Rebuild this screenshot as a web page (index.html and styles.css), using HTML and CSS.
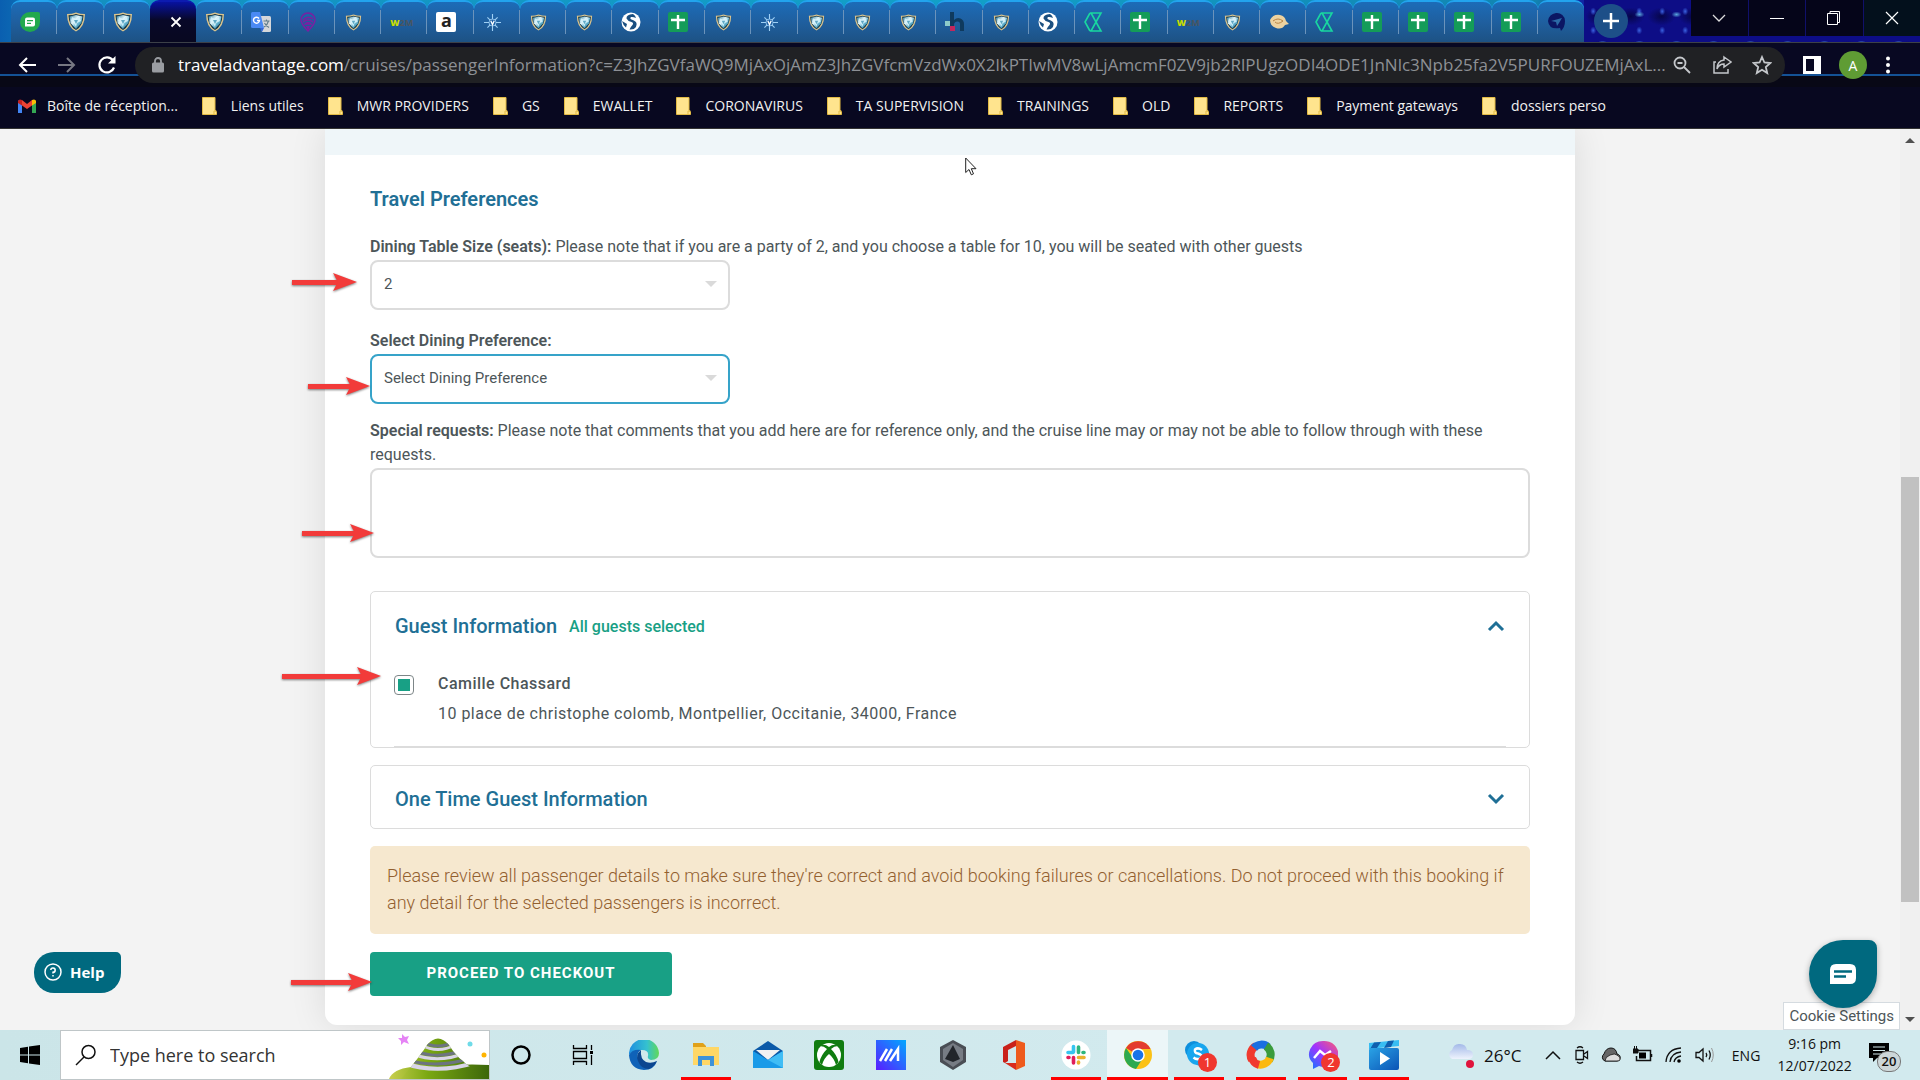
FILE: index.html
```html
<!DOCTYPE html>
<html lang="en">
<head>
<meta charset="utf-8">
<title>Passenger information</title>
<link rel="stylesheet" href="styles.css">
</head>
<body>
<svg class="sprite" aria-hidden="true">
  <defs>
    <linearGradient id="gem" x1="0" y1="0" x2="1" y2="1"><stop offset="0" stop-color="#2b7ea0"/><stop offset=".4" stop-color="#e2f6fb"/><stop offset=".65" stop-color="#5fb2cf"/><stop offset="1" stop-color="#123c55"/></linearGradient>
    <linearGradient id="edgeg" x1="0" y1="0" x2="1" y2="0"><stop offset="0" stop-color="#1d8fe0"/><stop offset=".6" stop-color="#35c1d0"/><stop offset="1" stop-color="#62d957"/></linearGradient>
    <linearGradient id="mag" x1="0" y1="1" x2="1" y2="0"><stop offset="0" stop-color="#5a1cff"/><stop offset="1" stop-color="#00a8ff"/></linearGradient>
    <linearGradient id="msg" x1="1" y1="0" x2="0" y2="1"><stop offset="0" stop-color="#ff5f6d"/><stop offset=".5" stop-color="#a033ff"/><stop offset="1" stop-color="#0a7cff"/></linearGradient>
    <linearGradient id="hill" x1="0" y1="0" x2="1" y2="0"><stop offset="0" stop-color="#c9cf50"/><stop offset=".4" stop-color="#7aa812"/><stop offset="1" stop-color="#3c660a"/></linearGradient>
    <linearGradient id="cloud" x1="0" y1="0" x2="0" y2="1"><stop offset="0" stop-color="#a3b9e8"/><stop offset="1" stop-color="#eef3fd"/></linearGradient>
    <linearGradient id="film" x1="0" y1="0" x2="1" y2="1"><stop offset="0" stop-color="#2aa3e6"/><stop offset="1" stop-color="#0b53b5"/></linearGradient>
    <clipPath id="cone"><path d="M14 46Q34 22 40 12Q51 -1 62 12Q70 26 88 37V46Z"/></clipPath>
  </defs>
  <symbol id="shield" viewBox="0 0 20 20"><path d="M1 2Q6 2 10 .5Q14 2 19 2Q19 15 10 19.500Q1 15 1 2Z" fill="#d9c48e"/><path d="M2.500 3.200Q7 3.200 10 2Q13 3.200 17.500 3.200Q17 14 10 18Q3 14 2.500 3.200Z" fill="#0d3046"/><path d="M3.500 4.500L10 3L16.500 4.500L15.500 11L10 17L4.500 11Z" fill="url(#gem)"/><path d="M6 5L10 7L14 5L15 9L11 11L10 15L8 11L5 9Z" fill="#d8f3fb" opacity=".85"/><path d="M8 8L12 8L10 12Z" fill="#5fa8c4"/></symbol>
  <symbol id="chat" viewBox="0 0 20 20"><path d="M10 0H18Q20 0 20 2V10A10 10 0 1 1 10 0Z" fill="#22a94d"/><path d="M7 5.500H13Q15 5.500 15 7.500V12.500Q15 14.500 13 14.500H5V7.500Q5 5.500 7 5.500Z" fill="#fff"/><path d="M7 8.700H13M7 11.300H11" stroke="#22a94d" stroke-width="1.200"/></symbol>
  <symbol id="translate" viewBox="0 0 20 20"><path d="M8 4H18.500Q20 4 20 5.500V18.500Q20 20 18.500 20H11Z" fill="#d5d7da"/><path d="M1.500 0H9L13 16H1.500Q0 16 0 14.500V1.500Q0 0 1.500 0Z" fill="#4a8af4"/><path d="M9 16H13L11 20Z" fill="#3367d6"/><path d="M8 6.500A3 3 0 1 0 8.500 8.500H6" fill="none" stroke="#fff" stroke-width="1.400"/><path d="M12.500 9H18.500M15.500 7.500V9M17.500 9Q16.500 13 13 15M13.500 11Q15 14 18 15.500" fill="none" stroke="#607d8b" stroke-width="1.100"/></symbol>
  <symbol id="pin" viewBox="0 0 20 20"><path d="M10 1A7 7 0 0 1 17 8Q17 12 10 19Q3 12 3 8A7 7 0 0 1 10 1Z" fill="none" stroke="#7b1fa2" stroke-width="1.500"/><path d="M5 8Q10 3 15 7M5 10Q10 6 15 10M7 12Q10 9 13 12Z" fill="none" stroke="#7b1fa2" stroke-width="1.300"/><path d="M8 14H12L10 19Z" fill="#7b1fa2"/></symbol>
  <symbol id="compass" viewBox="0 0 20 20"><path d="M10 0V20M0 10H20M4 4L16 16M16 4L4 16" stroke="#9fd0f5" stroke-width="1.300"/><circle cx="10" cy="10" r="4.500" fill="#9fd0f5"/><circle cx="10" cy="10" r="3.600" fill="#1d5fa4"/><path d="M8 8L10 12.500L12 8" fill="none" stroke="#fff" stroke-width="1.500"/></symbol>
  <symbol id="globe" viewBox="0 0 20 20"><circle cx="10" cy="10" r="9.500" fill="#fff"/><path d="M12 2Q5 2.500 5.500 6.500Q7 9.500 10.500 10Q13 11 11.500 13Q9.500 15 8.500 17.500Q13 18 15 15Q16.500 12 15 10Q13 8 10.500 7.500Q8.500 6.500 10 5Q12 4.500 15 6Q14.500 3.500 12 2Z" fill="#1b4f80"/><path d="M1 9L6 12L5 15.500Q2 13 1 9Z" fill="#1b4f80"/></symbol>
  <symbol id="sheet" viewBox="0 0 20 20"><rect width="20" height="20" rx="2" fill="#149c58"/><path d="M10 3V17M3 8H17" stroke="#fff" stroke-width="2.400"/></symbol>
  <symbol id="hlogo" viewBox="0 0 20 20"><path d="M5 0H9V8Q12 5 15.500 6.500Q19 8 19 12V19H15V12Q15 9.500 12.500 9.500Q9 9.500 9 13V14H5Z" fill="#0f3a5e"/><rect y="9" width="5" height="5" fill="#8ccac9"/><rect x="5" y="14" width="5" height="5" fill="#c2275d"/></symbol>
  <symbol id="hour" viewBox="0 0 20 20"><path d="M6 1H17L7 19M6 19H17L7 1M6 1L1 10L6 19" fill="none" stroke="#19d7a0" stroke-width="1.600"/></symbol>
  <symbol id="shell" viewBox="0 0 20 20"><path d="M1 8Q4 2 11 3Q16 4 17 9L20 12L16 13Q13 18 7 16Q1 14 1 8Z" fill="#ecd2a0"/><path d="M4 9Q9 5 14 9Q9 13 6 10" fill="none" stroke="#b98545"/></symbol>
  <symbol id="bird" viewBox="0 0 20 20"><path d="M9 1A8 8 0 0 1 18 9Q18 15 14 19L13 16Q2 18 1 9Q2 2 9 1Z" fill="#0b1663"/><path d="M4 9L15 6L12 11L10 14L9 10Z" fill="#2c6aa6"/></symbol>
  <symbol id="folder" viewBox="0 0 15 18"><path d="M.5.5H13V13L14.500 15V17.500H.5Z" fill="#ffe48e" stroke="#e3bb45"/><path d="M12 17V14H14.500" fill="none" stroke="#e3bb45"/></symbol>
</svg>

<header class="browser">
  <div class="tabstrip">
    <nav class="tabs" aria-label="Tabs">
      <button class="tab" aria-label="Chat"><svg><use href="#chat"/></svg></button>
      <button class="tab" aria-label="Travel Advantage"><svg><use href="#shield"/></svg></button>
      <button class="tab" aria-label="Travel Advantage"><svg><use href="#shield"/></svg></button>
      <button class="tab active" aria-label="Close tab"><svg viewBox="0 0 20 20"><path d="M5 5L15 15M15 5L5 15" stroke="#fff" stroke-width="2"/></svg></button>
      <button class="tab" aria-label="Travel Advantage"><svg><use href="#shield"/></svg></button>
      <button class="tab" aria-label="Translate"><svg><use href="#translate"/></svg></button>
      <button class="tab" aria-label="Map"><svg><use href="#pin"/></svg></button>
      <button class="tab small" aria-label="Travel Advantage"><svg><use href="#shield"/></svg></button>
      <button class="tab w2m"><b>W</b><i>2M</i></button>
      <button class="tab aq"><b>a</b></button>
      <button class="tab small" aria-label="Compass"><svg><use href="#compass"/></svg></button>
      <button class="tab small" aria-label="Travel Advantage"><svg><use href="#shield"/></svg></button>
      <button class="tab small" aria-label="Travel Advantage"><svg><use href="#shield"/></svg></button>
      <button class="tab" aria-label="Globe"><svg><use href="#globe"/></svg></button>
      <button class="tab" aria-label="Sheet"><svg><use href="#sheet"/></svg></button>
      <button class="tab small" aria-label="Travel Advantage"><svg><use href="#shield"/></svg></button>
      <button class="tab small" aria-label="Compass"><svg><use href="#compass"/></svg></button>
      <button class="tab small" aria-label="Travel Advantage"><svg><use href="#shield"/></svg></button>
      <button class="tab small" aria-label="Travel Advantage"><svg><use href="#shield"/></svg></button>
      <button class="tab small" aria-label="Travel Advantage"><svg><use href="#shield"/></svg></button>
      <button class="tab" aria-label="Hotels"><svg><use href="#hlogo"/></svg></button>
      <button class="tab small" aria-label="Travel Advantage"><svg><use href="#shield"/></svg></button>
      <button class="tab" aria-label="Globe"><svg><use href="#globe"/></svg></button>
      <button class="tab" aria-label="Provider"><svg><use href="#hour"/></svg></button>
      <button class="tab" aria-label="Sheet"><svg><use href="#sheet"/></svg></button>
      <button class="tab w2m"><b>W</b><i>2M</i></button>
      <button class="tab small" aria-label="Travel Advantage"><svg><use href="#shield"/></svg></button>
      <button class="tab" aria-label="Shell"><svg><use href="#shell"/></svg></button>
      <button class="tab" aria-label="Provider"><svg><use href="#hour"/></svg></button>
      <button class="tab" aria-label="Sheet"><svg><use href="#sheet"/></svg></button>
      <button class="tab" aria-label="Sheet"><svg><use href="#sheet"/></svg></button>
      <button class="tab" aria-label="Sheet"><svg><use href="#sheet"/></svg></button>
      <button class="tab" aria-label="Sheet"><svg><use href="#sheet"/></svg></button>
      <button class="tab" aria-label="Flights"><svg><use href="#bird"/></svg></button>
    </nav>
    <div class="strip-end">
      <button class="newtab" aria-label="New tab"><svg width="16" height="16" viewBox="0 0 16 16"><path d="M8 0V16M0 8H16" stroke="#fff" stroke-width="2.500"/></svg></button>
      <div class="winbtns">
        <button aria-label="Search tabs"><svg width="16" height="16" viewBox="0 0 16 16"><path d="M2 5L8 11L14 5" fill="none" stroke="#ddd" stroke-width="1.300"/></svg></button>
        <button aria-label="Minimise"><svg width="16" height="16" viewBox="0 0 16 16"><path d="M1 8.500H15" stroke="#fff"/></svg></button>
        <button aria-label="Restore"><svg width="16" height="16" viewBox="0 0 16 16"><path d="M1.500 3.500H11.500V14.500H1.500ZM4 3V1.500H13.500V12.500H12" fill="none" stroke="#fff"/></svg></button>
        <button aria-label="Close"><svg width="16" height="16" viewBox="0 0 16 16"><path d="M2 2L14 14M14 2L2 14" stroke="#fff" stroke-width="1.200"/></svg></button>
      </div>
    </div>
  </div>
  <div class="toolbar">
    <div class="navbtns">
      <button aria-label="Back"><svg width="22" height="22" viewBox="0 0 22 22"><path d="M20 11H4M11 4L4 11L11 18" fill="none" stroke="#fff" stroke-width="2"/></svg></button>
      <button aria-label="Forward"><svg width="22" height="22" viewBox="0 0 22 22"><path d="M2 11H18M11 4L18 11L11 18" fill="none" stroke="#777883" stroke-width="2"/></svg></button>
      <button aria-label="Reload"><svg width="22" height="22" viewBox="0 0 22 22"><path d="M18 13.500A7.500 7.500 0 1 1 17 6.500L18.500 8" fill="none" stroke="#fff" stroke-width="2.200"/><path d="M19.500 2V9.500H12Z" fill="#fff"/></svg></button>
    </div>
    <div class="omnibox">
      <svg class="lock" width="12" height="16" viewBox="0 0 12 16"><rect y="5.500" width="12" height="10" rx="1.500" fill="#9a9da2"/><path d="M3 6V4A3 3 0 0 1 9 4V6" fill="none" stroke="#9a9da2" stroke-width="1.800"/></svg>
      <div class="url" role="textbox" aria-label="Address"><b>traveladvantage.com</b>/cruises/passengerInformation?c=Z3JhZGVfaWQ9MjAxOjAmZ3JhZGVfcmVzdWx0X2lkPTIwMV8wLjAmcmF0ZV9jb2RlPUgzODI4ODE1JnNlc3Npb25fa2V5PURFOUZEMjAxL...</div>
      <button aria-label="Zoom"><svg width="20" height="20" viewBox="0 0 20 20"><circle cx="8" cy="8" r="5.500" fill="none" stroke="#c4c7cb" stroke-width="1.800"/><path d="M12 12L18 18M5.500 8H10.500" stroke="#c4c7cb" stroke-width="1.800"/></svg></button>
      <button aria-label="Share"><svg width="20" height="20" viewBox="0 0 20 20"><path d="M4 7H2V18H16V14" fill="none" stroke="#c4c7cb" stroke-width="1.500"/><path d="M12 2L19 7L12 12V9Q7 9 5 14Q5 6 12 5Z" fill="none" stroke="#c4c7cb" stroke-width="1.500"/></svg></button>
      <button aria-label="Bookmark"><svg width="20" height="20" viewBox="0 0 20 20"><path d="M10 2L12.400 7.500L18.300 8L13.800 12L15.200 18L10 14.800L4.800 18L6.200 12L1.700 8L7.600 7.500Z" fill="none" stroke="#c4c7cb" stroke-width="1.800"/></svg></button>
    </div>
    <div class="tools">
      <button aria-label="Side panel"><svg width="18" height="18" viewBox="0 0 18 18"><path d="M0 0H18V18H0ZM3 3V15H11V3Z" fill="#fff" fill-rule="evenodd"/></svg></button>
      <button class="avatar">A</button>
      <button aria-label="Menu"><svg width="6" height="18" viewBox="0 0 6 18"><g fill="#fff"><circle cx="3" cy="2.500" r="2"/><circle cx="3" cy="9" r="2"/><circle cx="3" cy="15.500" r="2"/></g></svg></button>
    </div>
  </div>
  <nav class="bookmarks" aria-label="Bookmarks">
    <a href="#"><svg class="gm" width="18" height="14" viewBox="0 0 18 14"><path d="M0 1V14H4V6Z" fill="#4285f4"/><path d="M18 1V14H14V6Z" fill="#34a853"/><path d="M0 2Q1 -.5 4 1V6.500L0 4Z" fill="#c5221f"/><path d="M18 2Q17 -.5 14 1V6.500L18 4Z" fill="#fbbc04"/><path d="M4 1L9 5L14 1V6.500L9 10L4 6.500Z" fill="#ea4335"/></svg>Boîte de réception...</a>
    <a href="#"><svg><use href="#folder"/></svg>Liens utiles</a>
    <a href="#"><svg><use href="#folder"/></svg>MWR PROVIDERS</a>
    <a href="#"><svg><use href="#folder"/></svg>GS</a>
    <a href="#"><svg><use href="#folder"/></svg>EWALLET</a>
    <a href="#"><svg><use href="#folder"/></svg>CORONAVIRUS</a>
    <a href="#"><svg><use href="#folder"/></svg>TA SUPERVISION</a>
    <a href="#"><svg><use href="#folder"/></svg>TRAININGS</a>
    <a href="#"><svg><use href="#folder"/></svg>OLD</a>
    <a href="#"><svg><use href="#folder"/></svg>REPORTS</a>
    <a href="#"><svg><use href="#folder"/></svg>Payment gateways</a>
    <a href="#"><svg><use href="#folder"/></svg>dossiers perso</a>
  </nav>
</header>

<div class="viewport">
  <main class="page">
    <form class="card">
      <div class="band"></div>
      <div class="content">
        <h2>Travel Preferences</h2>
        <div class="field">
          <label for="seats"><strong>Dining Table Size (seats):</strong> Please note that if you are a party of 2, and you choose a table for 10, you will be seated with other guests</label>
          <div class="select"><select id="seats"><option>2</option></select><span class="arrow a1"></span></div>
        </div>
        <div class="field">
          <label for="pref"><strong>Select Dining Preference:</strong></label>
          <div class="select focused"><select id="pref"><option>Select Dining Preference</option></select><span class="arrow a2"></span></div>
        </div>
        <div class="field requests">
          <label for="req"><strong>Special requests:</strong> Please note that comments that you add here are for reference only, and the cruise line may or may not be able to follow through with these requests.</label>
          <div class="area"><textarea id="req"></textarea><span class="arrow a3"></span></div>
        </div>
        <section class="panel">
          <button type="button" class="head"><span class="title">Guest Information</span><span class="status">All guests selected</span><svg width="18" height="12" viewBox="0 0 18 12"><path d="M2 10L9 3L16 10" fill="none" stroke="#1f6f96" stroke-width="3"/></svg></button>
          <div class="guest">
            <input type="checkbox" id="g1" checked>
            <label for="g1"><strong>Camille Chassard</strong><span>10 place de christophe colomb, Montpellier, Occitanie, 34000, France</span></label>
          </div>
          <span class="arrow a4"></span>
        </section>
        <section class="panel">
          <button type="button" class="head"><span class="title">One Time Guest Information</span><svg width="18" height="12" viewBox="0 0 18 12"><path d="M2 2L9 9L16 2" fill="none" stroke="#1f6f96" stroke-width="3"/></svg></button>
        </section>
        <p class="alert">Please review all passenger details to make sure they're correct and avoid booking failures or cancellations. Do not proceed with this booking if any detail for the selected passengers is incorrect.</p>
        <div class="submit"><button type="button" class="checkout">PROCEED TO CHECKOUT</button><span class="arrow a5"></span></div>
      </div>
    </form>
    <button class="help"><svg width="18" height="18" viewBox="0 0 18 18"><circle cx="9" cy="9" r="8" fill="none" stroke="#fff" stroke-width="1.500"/><path d="M6.800 7A2.200 2.200 0 1 1 9 9.300V10.500M9 12V13.600" fill="none" stroke="#fff" stroke-width="1.500"/></svg>Help</button>
    <button class="cookies">Cookie Settings</button>
    <button class="bubble" aria-label="Open chat"><svg width="26" height="20" viewBox="0 0 26 20"><path d="M6 0H20Q26 0 26 6V14Q26 20 20 20H0V6Q0 0 6 0Z" fill="#fff"/><path d="M4 7.500H22M4 12.500H16" stroke="#00697f" stroke-width="2.500"/></svg></button>
    <svg class="cursor" width="12" height="19" viewBox="0 0 12 19"><path d="M.7 1V15.500L4 12.500L6.300 17.800L8.500 16.800L6.300 11.700H11Z" fill="#fff" stroke="#222"/></svg>
  </main>
  <div class="scrollbar" aria-hidden="true"><i class="up"></i><i class="before"></i><i class="thumb"></i><i class="after"></i><i class="down"></i></div>
</div>

<footer class="taskbar">
  <button class="start" aria-label="Start"><svg width="20" height="20" viewBox="0 0 20 20"><path d="M0 3L8 1.800V9.500H0ZM9 1.600L20 0V9.500H9ZM0 10.500H8V18.200L0 17ZM9 10.500H20V20L9 18.400Z"/></svg></button>
  <div class="search">
    <svg width="22" height="22" viewBox="0 0 22 22"><circle cx="13.500" cy="8" r="6.500" fill="none" stroke="#111" stroke-width="1.500"/><path d="M9 13L1 21" stroke="#111" stroke-width="1.500"/></svg>
    <input type="text" placeholder="Type here to search" aria-label="Type here to search">
    <svg class="hills" width="102" height="46" viewBox="0 0 102 46"><path d="M2 46Q6 36 24 34L70 32Q84 31 102 32V46Z" fill="url(#hill)"/><g clip-path="url(#cone)"><rect width="102" height="46" fill="url(#hill)"/><g fill="none"><path d="M36 9Q51 17 66 9" stroke="#6d7481" stroke-width="3"/><path d="M34 12Q51 21 68 12" stroke="#d9d5e8" stroke-width="3"/><path d="M28 18Q51 27 76 17" stroke="#6d7481" stroke-width="3"/><path d="M26 21Q51 31 78 20" stroke="#d9d5e8" stroke-width="3"/><path d="M20 27Q51 36 84 25" stroke="#6d7481" stroke-width="3"/><path d="M16 30Q51 42 90 29" stroke="#d9d5e8" stroke-width="4"/></g></g><path d="M15 1L18 4L22 3L20 7L22 11L17 9L14 12V8L11 5L15 5Z" fill="#e583f5"/><circle cx="83" cy="11" r="2.500" fill="#6fdbe8"/><circle cx="97" cy="22" r="2.500" fill="#ffb400"/></svg>
  </div>
  <nav class="apps" aria-label="Apps">
    <button aria-label="Cortana"><svg viewBox="0 0 30 30"><circle cx="15" cy="15" r="8.500" fill="none" stroke="#000" stroke-width="2.500"/></svg></button>
    <button aria-label="Task view"><svg viewBox="0 0 30 30"><g fill="none" stroke="#000" stroke-width="1.300"><path d="M5.500 5V8.500H18.500V5M5.500 25V21.500H18.500V25M5.500 11.500H18.500V18.500H5.500ZM23.500 5V10M23.500 15V25"/></g><rect x="22" y="11" width="3" height="3"/></svg></button>
    <button aria-label="Edge"><svg viewBox="0 0 30 30"><path d="M0 15A15 15 0 0 1 30 13Q30 20 22 20Q18 19 19 16Q20 10 13 10Q3 10 0 15Z" fill="url(#edgeg)"/><path d="M0 15Q3 9 12 10Q8 12 8.500 17Q10 25 18 25Q23 25 28 21Q25 30 15 30Q1 29 0 15Z" fill="#0f62b8"/><path d="M12 10Q6 15 9 21Q12 29 20 29Q25 27 28 21Q22 24 17 22Q11 19 12 10Z" fill="#0b4690"/></svg></button>
    <button class="open" aria-label="File Explorer"><svg viewBox="0 0 30 30"><path d="M2 3H12L15 6V10H2Z" fill="#e0a11a"/><path d="M2 7H28V25H2Z" fill="#ffd766"/><path d="M7 26V16H23V26H19V20H11V26Z" fill="#3f93d8"/></svg></button>
    <button aria-label="Mail"><svg viewBox="0 0 30 30"><path d="M0 11L15 1L30 11V28H0Z" fill="#0b5aa8"/><path d="M3 10H27L15 20Z" fill="#f2f2f2"/><path d="M0 11L15 20L30 11V28H0Z" fill="#1a9be8"/><path d="M15 20L30 11V28Z" fill="#40bdf5"/></svg></button>
    <button aria-label="Xbox"><svg viewBox="0 0 30 30"><rect width="30" height="30" rx="3" fill="#107c10"/><circle cx="15" cy="15" r="12" fill="#fff"/><path d="M6 6Q10 3 15 7Q20 3 24 6Q20 6 17 9Q23 15 24.500 22L22 25Q20 18 15 14Q10 18 8 25L5.500 22Q7 15 13 9Q10 6 6 6Z" fill="#107c10"/></svg></button>
    <button aria-label="MyASUS"><svg viewBox="0 0 30 30"><rect width="30" height="30" fill="url(#mag)"/><path d="M4 21L11 9M9 21L16 9M14 21L22 9V21" stroke="#fff" stroke-width="2.500" fill="none"/></svg></button>
    <button aria-label="Armoury"><svg viewBox="0 0 30 30"><path d="M15 0L28 7V22L15 30L2 22V7Z" fill="#4a4e55"/><path d="M15 3L25 9V20L15 27L5 20V9Z" fill="#777c84"/><path d="M15 5L22 19L15 22L7 19Z" fill="#22252a"/></svg></button>
    <button aria-label="Office"><svg viewBox="0 0 30 30"><path d="M4 7L17 0V6L9 10V21L6 23L4 22Z" fill="#c9211a"/><path d="M17 0L26 3V26L17 30Z" fill="#ee5a1c"/><path d="M6 23H17V30Z" fill="#d92b1d"/></svg></button>
    <button class="open" aria-label="Slack"><svg viewBox="0 0 30 30"><circle cx="15" cy="15" r="14.500" fill="#fff"/><g stroke-width="3.600" stroke-linecap="round"><path d="M12.500 6.500V12M7 12.500H12" stroke="#36c5f0"/><path d="M17.500 7V12.500M23 12.500H22" stroke="#2eb67d"/><path d="M17.500 17.500H23M17.500 22V23" stroke="#ecb22e"/><path d="M12.500 17.500V23M7 17.500H8" stroke="#e01e5a"/></g></svg></button>
    <button class="open current" aria-label="Chrome"><svg viewBox="0 0 30 30"><circle cx="15" cy="15" r="14" fill="#fbc116"/><path d="M15 15L3 8A14 14 0 0 1 27.500 9H15Z" fill="#e33b2e"/><path d="M3 8A14 14 0 0 0 13 28.900L20 18L10 18Z" fill="#2da94f"/><circle cx="15" cy="15" r="6.800" fill="#fff"/><circle cx="15" cy="15" r="5.300" fill="#1a73e8"/></svg></button>
    <button class="open" aria-label="Skype"><svg viewBox="0 0 30 30"><circle cx="10" cy="10" r="9" fill="#0d8fdc"/><circle cx="17" cy="17" r="9" fill="#0d8fdc"/><circle cx="14" cy="14" r="11" fill="#18a6ee"/><path d="M18 10Q14 7 11 9.500Q10 13 14 13.500Q19 15 17 18Q13 20.500 9.500 17.500" fill="none" stroke="#fff" stroke-width="2.500"/></svg><span class="badge">1</span></button>
    <button class="open" aria-label="Screen recorder"><svg viewBox="0 0 30 30"><g fill="none" stroke-width="8"><path d="M6 20A10 10 0 0 1 10 6" stroke="#f03a2e"/><path d="M8 8A10 10 0 0 1 22 7" stroke="#1b6fe0"/><path d="M20 6A10 10 0 0 1 23 20" stroke="#3a9c3c"/><path d="M24 18A10 10 0 0 1 11 24" stroke="#fbb90f"/><path d="M13 25A10 10 0 0 1 6 18" stroke="#f03a2e"/></g></svg></button>
    <button class="open" aria-label="Messenger"><svg viewBox="0 0 30 30"><path d="M15 1A14 13 0 1 1 11 26L5 29V23A14 13 0 0 1 15 1Z" fill="url(#msg)"/><path d="M6 18L12 11L17 15L23 11" fill="none" stroke="#fff" stroke-width="2.500"/></svg><span class="badge">2</span></button>
    <button class="open" aria-label="Films"><svg viewBox="0 0 30 30"><path d="M0 3L30 0V6L0 9Z" fill="#38bdf2"/><path d="M5 2.500L12 2L8 8L1 9ZM19 1L25 .5L22 7L15 8Z" fill="#0f5fae"/><rect y="8" width="30" height="22" rx="2" fill="url(#film)"/><path d="M11 12V25L21 18.500Z" fill="#fff"/></svg></button>
  </nav>
  <div class="tray">
    <span class="weather"><svg width="30" height="28" viewBox="0 0 30 28"><path d="M6 18A5 5 0 0 1 6 9Q8 2 14 3Q20 3 21 9Q27 9 27 14Q27 18 22 18Z" fill="url(#cloud)"/><circle cx="24" cy="23" r="4" fill="#e0143c"/></svg>26°C</span>
    <span class="icons">
      <svg width="16" height="20" viewBox="0 0 16 20"><path d="M1 14L8 7L15 14" fill="none" stroke="#111" stroke-width="1.500"/></svg>
      <svg width="16" height="20" viewBox="0 0 16 20"><path d="M3 5.500H10.500V14.500H3ZM11 9L14.500 6.500V13.500L11 11M4 3Q7 .500 10 3M4 17Q7 19.500 10 17" fill="none" stroke="#111" stroke-width="1.300"/></svg>
      <svg width="20" height="20" viewBox="0 0 20 20"><path d="M4 16A4 4 0 0 1 3 9Q5 3 10 3Q15 3 16 9Q20 10 19 14Q18 16 16 16Z" fill="#666" stroke="#111"/><path d="M4 16Q4 12 9 10Q14 8 16 10Q20 12 19 15Q18 16 16 16Z" fill="#ddd" stroke="#111" stroke-width=".8"/></svg>
      <svg width="20" height="20" viewBox="0 0 20 20"><path d="M5 5.500H17.500V15.500H3.500V11M18.500 9V12" fill="none" stroke="#111" stroke-width="1.500"/><rect x="6" y="7.500" width="7" height="6"/><path d="M0 4H5V8H0ZM1.500 1V4M3.500 1V4" fill="#111" stroke="#111"/></svg>
      <svg width="18" height="20" viewBox="0 0 18 20"><g fill="none" stroke="#111" stroke-width="1.300"><path d="M1 17Q2 4 16 3M5 17Q6 8 16 7M9 17Q10 12 16 11"/></g><circle cx="14" cy="16" r="1.800"/></svg>
      <svg width="20" height="20" viewBox="0 0 20 20"><path d="M1 7.500H4L8 4V16L4 12.500H1Z" fill="none" stroke="#111" stroke-width="1.300"/><path d="M11 8Q12.500 10 11 12M14 5.500Q16.500 10 14 14.500" fill="none" stroke="#111" stroke-width="1.300"/><path d="M16.500 3Q20 10 16.500 17" fill="none" stroke="#999"/></svg>
    </span>
    <span class="lang">ENG</span>
    <span class="clock"><span>9:16 pm</span><span>12/07/2022</span></span>
    <span class="notes"><svg width="20" height="20" viewBox="0 0 20 20"><path d="M0 0H20V15H8L4 19V15H0Z"/><path d="M4 4H16M4 7.500H16M4 11H12" stroke="#d2e9ec"/></svg><span class="count">20</span></span>
  </div>
</footer>
</body>
</html>
```
FILE: styles.css
```css
* { box-sizing: border-box; }
body {
  margin: 0;
  min-height: 100vh;
  display: flex;
  flex-direction: column;
  font-family: Roboto, "Liberation Sans", sans-serif;
  font-size: 16px;
  color: #4d5659;
}
button { font: inherit; color: inherit; background: none; border: 0; padding: 0; margin: 0; }
.sprite { position: absolute; width: 0; height: 0; }

/* Browser chrome */
.browser { background: #080820; border-bottom: 1px solid #333; font-family: "Open Sans", "Noto Sans", sans-serif; }
.tabstrip {
  display: flex;
  height: 43px;
  padding-left: 11px;
  border-bottom: 1px solid #3c4048;
  background: linear-gradient(90deg, #0a5fb0, #1490c0 4%, #12a0c8 50%, #1284b0 80%, #1010a0 83%);
}
.tabs { flex: 1; display: flex; min-width: 0; }
.tab {
  position: relative;
  flex: 1 1 30px;
  min-width: 0;
  display: flex;
  align-items: center;
  padding-left: 9px;
  border-top: 2px solid #22a4ee;
  border-radius: 9px 9px 0 0;
  background: linear-gradient(#1c6cb8, #1f5f9f 50%, #1d5284);
}
.tab::after { content: ""; position: absolute; right: 0; top: 8px; width: 1px; height: 24px; background: #6b93bb; }
.tab svg { flex: none; width: 20px; height: 20px; }
.tab.small { padding-left: 10px; }
.tab.small svg { width: 17px; height: 17px; }
.tab.active { background: linear-gradient(#0712a0, #080828 45%, #080820); border-color: #0c1bb0; padding-left: 17px; }
.tab.active svg { width: 18px; }
.tab.active::after, .tab:last-child::after, .tab:nth-child(3)::after { display: none; }
.w2m { font-size: 9px; font-weight: 700; }
.w2m b { color: #c9dc00; font-weight: 800; }
.w2m i { color: #4a5560; font-style: normal; }
.aq b {
  width: 20px;
  height: 20px;
  border-radius: 2px;
  background: #fff;
  color: #222;
  font-size: 18px;
  line-height: 16px;
  text-align: center;
}
.strip-end {
  width: 336px;
  display: flex;
  align-items: flex-start;
  justify-content: space-between;
  padding-left: 10px;
  background-color: #0d0d86;
  background-image:
    radial-gradient(ellipse 5px 3px at 50% 50%, #59a6dc, transparent),
    radial-gradient(ellipse 3px 4px at 40% 60%, #3a62e0, transparent),
    radial-gradient(ellipse 14px 9px at 50% 50%, #06064a, transparent);
  background-size: 37px 29px, 23px 19px, 31px 33px;
}
.newtab { display: grid; place-items: center; width: 34px; height: 34px; margin-top: 4px; border-radius: 50%; background: #1d4f88; }
.winbtns { display: flex; width: 229px; height: 36px; }
.winbtns button { flex: 1; display: grid; place-items: center; background: #050519; border-right: 1px solid #10106a; }
.winbtns button:last-child { background: #03101c; border: 0; }

.toolbar { display: flex; align-items: center; height: 44px; background: linear-gradient(#080822 31px, #145296 31px, #145296 33px, #080816 33px); }
.navbtns { display: flex; width: 135px; gap: 18px; padding-left: 16px; }
.navbtns button, .tools button, .omnibox button { display: grid; place-items: center; }
.omnibox {
  flex: 1;
  min-width: 0;
  display: flex;
  align-items: center;
  gap: 20px;
  height: 36px;
  padding: 0 13px 0 17px;
  border-radius: 18px;
  background: #202124;
}
.lock { flex: none; margin-right: -6px; }
.url { flex: 1; min-width: 0; margin-right: -16px; overflow: hidden; white-space: nowrap; font-size: 17px; line-height: 28px; color: #8d9095; }
.url b { font-weight: 400; color: #fff; }
.tools { display: flex; align-items: center; width: 135px; gap: 18px; padding-left: 18px; }
.tools .avatar { width: 28px; height: 28px; border-radius: 50%; background: #5f9c34; color: #fff; font-size: 14px; }

.bookmarks { display: flex; align-items: center; gap: 24px; height: 41px; padding: 0 18px 4px; background: #080820; }
.bookmarks a { display: flex; align-items: center; gap: 14px; color: #f1f1f1; font-size: 14px; line-height: 20px; text-decoration: none; white-space: nowrap; }
.bookmarks svg { width: 15px; height: 18px; flex: none; }
.bookmarks .gm { width: 18px; height: 14px; margin-right: -3px; }

/* Page */
.viewport { flex: 1; display: flex; background: #f3f3f3; }
.page { position: relative; flex: 1; min-width: 0; padding-bottom: 5px; overflow: hidden; }
.card { max-width: 1250px; margin: 0 auto; border-radius: 0 0 12px 12px; background: #fff; box-shadow: 0 0 36px rgba(0, 0, 0, .1); }
.band { height: 26px; background: #eff6f9; }
.content { padding: 30px 45px 29px; }
h2 { margin: 0 0 22px; font-size: 20px; line-height: 28px; font-weight: 600; color: #216f95; }
strong { font-weight: 500; }
.field { margin-bottom: 19px; line-height: 24px; }
.field:nth-of-type(2) { margin-bottom: 15px; }
.field label { display: block; margin-bottom: 1px; }
.field.requests { margin-bottom: 33px; }
.field strong { font-weight: 600; }
.select, .area, .submit { position: relative; }
.select { width: 360px; max-width: 100%; }
.select select {
  appearance: none;
  display: block;
  width: 100%;
  height: 50px;
  padding: 0 12px 3px;
  border: 2px solid #dcdcdc;
  border-radius: 8px;
  background: #fff;
  color: #4d5659;
  font: 15px/20px Roboto, sans-serif;
}
.select.focused select { border-color: #36a3c9; }
.select::after { content: ""; position: absolute; right: 13px; top: 21px; border: 6px solid transparent; border-top-color: #dadada; border-bottom: 0; }
textarea { display: block; width: 100%; height: 90px; border: 2px solid #dcdcdc; border-radius: 8px; resize: none; background: #fff; }
.panel { position: relative; margin-bottom: 17px; border: 1px solid #dcdcdc; border-radius: 5px; }
.head { display: flex; align-items: center; width: 100%; padding: 19px 24px 15px; line-height: 28px; text-align: left; }
.head svg { margin-left: auto; }
.title { font-size: 20px; font-weight: 500; color: #216f95; }
.status { margin-left: 12px; padding-top: 2px; font-weight: 500; color: #18a085; }
.guest { display: flex; margin: 0 23px; padding: 13px 0 17px; border-bottom: 1px solid #dcdcdc; line-height: 30px; }
.guest input { appearance: none; flex: none; width: 20px; height: 20px; margin: 6px 24px 0 0; padding: 3px; border: 1px solid #7d8688; border-radius: 4px; background: #18a085 content-box; }
.guest label { display: flex; flex-direction: column; letter-spacing: .03em; }
.alert { margin: 0 0 18px; padding: 16px 17px 18px; border-radius: 5px; background: #f6e8cf; color: #93602f; font-size: 18px; font-weight: 300; line-height: 27px; }
.checkout { display: block; width: 302px; height: 44px; padding-bottom: 3px; border-radius: 4px; background: #18a085; color: #fff; font-size: 15px; font-weight: 700; letter-spacing: 1px; }

/* Red pointers laid over the form */
.arrow { position: absolute; z-index: 1; display: flex; align-items: center; height: 20px; filter: drop-shadow(0 1px 1px rgba(0, 0, 0, .5)); }
.arrow::before { content: ""; flex: 1; height: 5px; margin-right: -5px; background: #f23b3a; }
.arrow::after { content: ""; width: 24px; height: 18px; background: #f23b3a; clip-path: polygon(0 0, 100% 50%, 0 100%, 20% 50%); }
.a1 { left: -78px; top: 12px; width: 65px; }
.a2 { left: -62px; top: 22px; width: 62px; }
.a3 { left: -68px; top: 55px; width: 72px; }
.a4 { left: -89px; top: 74px; width: 99px; }
.a5 { left: -79px; top: 20px; width: 81px; }

.help {
  position: absolute;
  left: 34px;
  bottom: 37px;
  display: flex;
  align-items: center;
  gap: 8px;
  height: 41px;
  padding: 0 17px 2px 10px;
  border-radius: 20px 5px 20px 20px;
  background: #00697f;
  color: #fff;
  font: 700 15px/20px "Open Sans", sans-serif;
}
.bubble { position: absolute; right: 23px; bottom: 22px; display: grid; place-items: center; width: 68px; height: 68px; border-radius: 34px 8px 34px 34px; background: #00697f; box-shadow: 0 2px 6px rgba(0, 0, 0, .3); }
.cookies { position: absolute; right: 0; bottom: 0; height: 28px; padding: 0 5px; border: 1px solid #d5dbe0; background: #fff; font-size: 15px; white-space: nowrap; }
.cursor { position: absolute; left: 965px; top: 28px; }
.scrollbar { width: 20px; display: flex; flex-direction: column; background: #f0f0f0; }
.scrollbar i { display: block; }
.up, .down { height: 21px; border: 5px solid transparent; }
.up::before, .down::after { content: ""; display: block; border: 5px solid transparent; }
.up::before { border-bottom-color: #505050; border-top: 0; margin-top: 4px; }
.down::after { border-top-color: #505050; border-bottom: 0; margin-top: 3px; }
.before { flex: 327; }
.thumb { flex: 425; margin: 0 1px; background: #c1c1c1; }
.after { flex: 107; }

/* Taskbar */
.taskbar { display: flex; height: 50px; background: linear-gradient(90deg, #cbe5e8, #d2eaee 60%); color: #111; font-family: "Open Sans", "Noto Sans", sans-serif; }
.start { width: 60px; display: grid; place-items: center; }
.search { width: 430px; display: flex; align-items: center; gap: 13px; padding-left: 14px; border: 1px solid #bfc6c8; background: #fff; }
.search input { flex: 1; min-width: 0; padding: 0; border: 0; background: none; font: 18px/24px "Open Sans", sans-serif; }
.search input::placeholder { color: #333; }
.hills { align-self: flex-end; }
.apps { display: flex; width: 925px; }
.apps button { position: relative; flex: 1; display: grid; place-items: center; }
.apps svg { width: 30px; height: 30px; }
.apps .open::after { content: ""; position: absolute; left: 6px; right: 6px; bottom: 0; height: 3px; background: #f00; }
.apps .current { background: #ecf6f8; }
.apps .current::after { left: 0; right: 0; }
.badge { position: absolute; right: 13px; bottom: 8px; width: 19px; height: 19px; border-radius: 50%; background: #f0372f; color: #fff; font-size: 13px; line-height: 19px; }
.tray { flex: 1; display: flex; align-items: center; justify-content: space-between; padding: 0 19px 0 31px; white-space: nowrap; }
.weather { display: flex; align-items: center; gap: 8px; font-size: 17px; }
.icons { display: flex; gap: 12px; margin-left: 6px; }
.lang { font-size: 14px; }
.clock { display: flex; flex-direction: column; font-size: 14px; line-height: 22px; text-align: center; }
.notes { position: relative; display: block; width: 32px; height: 24px; }
.count { position: absolute; right: 0; top: 8px; width: 24px; height: 21px; border: 1px solid #777; border-radius: 10px; background: #ccd6d8; font-size: 13px; line-height: 18px; font-weight: 600; text-align: center; }
```
